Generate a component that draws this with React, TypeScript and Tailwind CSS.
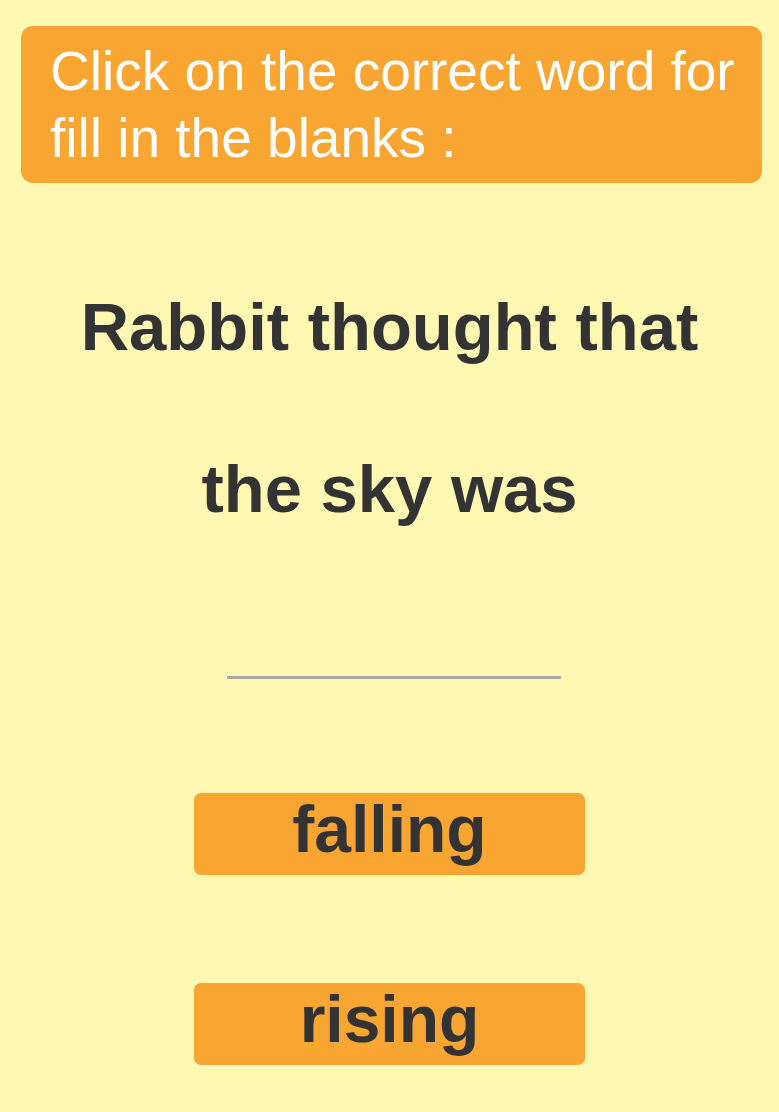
import { FC } from "react"

const choices = ["falling", "rising"]

const App: FC = () => {
  return (
    <div className="min-h-screen w-full bg-[#fef8b3] pt-[26px] font-['Liberation_Sans',Arial,sans-serif]">
      <div className="ml-[21px] mr-[17px] rounded-[12px] bg-[#f8a631] pl-[29px] pr-[10px] pt-[12px] pb-[11px]">
        <p className="text-[55px] leading-[67px] text-white">
          Click on the correct word for fill in the blanks :
        </p>
      </div>

      <div className="mt-[63px] flex flex-col items-center text-[#333333]">
        <p className="text-[67px] font-bold leading-[162px]">Rabbit thought that</p>
        <p className="text-[67px] font-bold leading-[162px]">the sky was</p>

        <div className="ml-[8px] mt-[106px] h-[3px] w-[334px] bg-[#a9a9a9]" />

        <div className="mt-[114px] flex flex-col gap-[108px]">
          {choices.map((word) => (
            <button
              key={word}
              className="flex h-[82px] w-[391px] items-center justify-center rounded-[7px] bg-[#f8a631] pb-[10px] text-[66px] font-bold leading-none text-[#333333]"
            >
              {word}
            </button>
          ))}
        </div>
      </div>
    </div>
  )
}

export default App
